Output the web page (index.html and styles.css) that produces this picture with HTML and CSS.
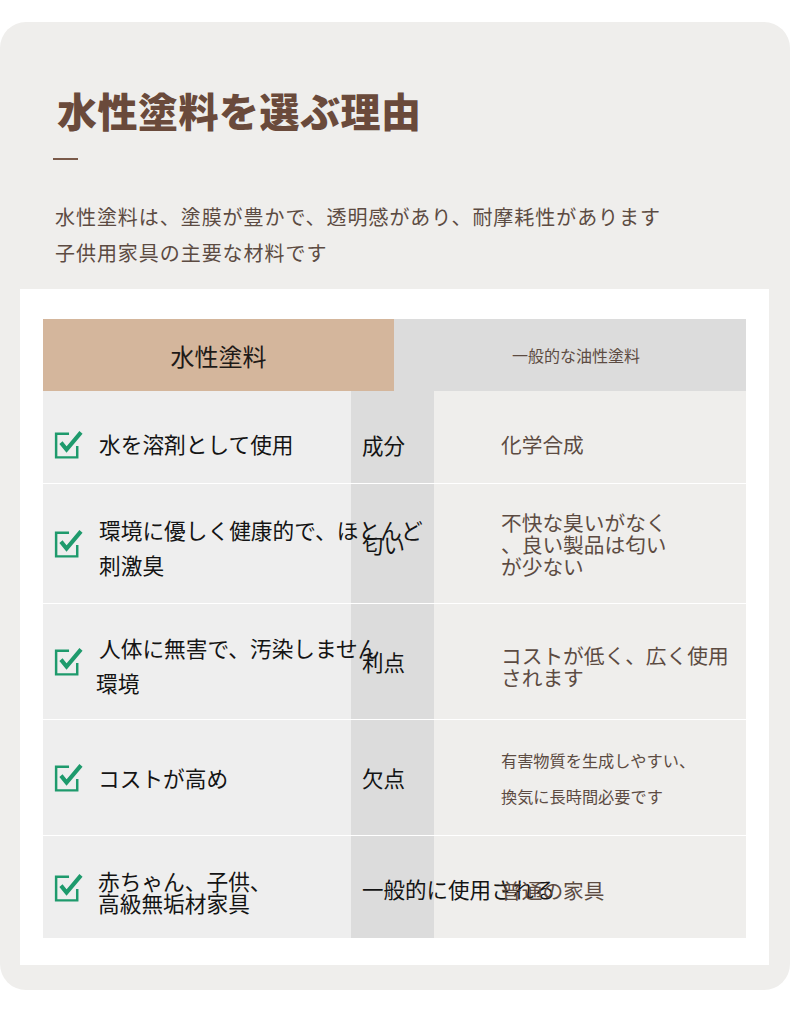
FILE: index.html
```html
<!DOCTYPE html>
<html lang="ja">
<head>
<meta charset="utf-8">
<title>水性塗料を選ぶ理由</title>
<link rel="stylesheet" href="styles.css">
</head>
<body>
<div class="card">
  <div class="intro">
    <h1 class="title">水性塗料を選ぶ理由</h1>
    <div class="dash"></div>
    <p class="lead">水性塗料は、塗膜が豊かで、透明感があり、耐摩耗性があります<br>子供用家具の主要な材料です</p>
  </div>
  <div class="panel">
    <div class="table">
      <div class="head">
        <div class="head-a">水性塗料</div>
        <div class="head-b">一般的な油性塗料</div>
      </div>
      <div class="row r1">
        <div class="c1"><svg class="chk" viewBox="0 0 26 26"><path d="M13.5 2.6H1.5v21.9h19.6V14" fill="none" stroke="#1e9a6c" stroke-width="2.3"/><path d="M6 10.8l5.2 6.4L24.6 1.3" fill="none" stroke="#1e9a6c" stroke-width="3.8"/></svg><span class="t1">水を溶剤として使用</span></div>
        <div class="c2"><span class="t2">成分</span></div>
        <div class="c3"><span class="t3">化学合成</span></div>
      </div>
      <div class="row r2">
        <div class="c1"><svg class="chk" viewBox="0 0 26 26"><path d="M13.5 2.6H1.5v21.9h19.6V14" fill="none" stroke="#1e9a6c" stroke-width="2.3"/><path d="M6 10.8l5.2 6.4L24.6 1.3" fill="none" stroke="#1e9a6c" stroke-width="3.8"/></svg><span class="t1 tall">環境に優しく健康的で、ほとんど<br>刺激臭</span></div>
        <div class="c2"><span class="t2">匂い</span></div>
        <div class="c3"><span class="t3 tight">不快な臭いがなく<br>、良い製品は匂い<br>が少ない</span></div>
      </div>
      <div class="row r3">
        <div class="c1"><svg class="chk" viewBox="0 0 26 26"><path d="M13.5 2.6H1.5v21.9h19.6V14" fill="none" stroke="#1e9a6c" stroke-width="2.3"/><path d="M6 10.8l5.2 6.4L24.6 1.3" fill="none" stroke="#1e9a6c" stroke-width="3.8"/></svg><span class="t1 tall">人体に無害で、汚染しません<br><span class="back">環境</span></span></div>
        <div class="c2"><span class="t2">利点</span></div>
        <div class="c3"><span class="t3 tight">コストが低く、広く使用<br>されます</span></div>
      </div>
      <div class="row r4">
        <div class="c1"><svg class="chk" viewBox="0 0 26 26"><path d="M13.5 2.6H1.5v21.9h19.6V14" fill="none" stroke="#1e9a6c" stroke-width="2.3"/><path d="M6 10.8l5.2 6.4L24.6 1.3" fill="none" stroke="#1e9a6c" stroke-width="3.8"/></svg><span class="t1 shift">コストが高め</span></div>
        <div class="c2"><span class="t2">欠点</span></div>
        <div class="c3"><span class="t3 small">有害物質を生成しやすい、<br>換気に長時間必要です</span></div>
      </div>
      <div class="row r5">
        <div class="c1"><svg class="chk" viewBox="0 0 26 26"><path d="M13.5 2.6H1.5v21.9h19.6V14" fill="none" stroke="#1e9a6c" stroke-width="2.3"/><path d="M6 10.8l5.2 6.4L24.6 1.3" fill="none" stroke="#1e9a6c" stroke-width="3.8"/></svg><span class="t1 tight shift">赤ちゃん、子供、<br>高級無垢材家具</span></div>
        <div class="c2"><span class="t2">一般的に使用される</span></div>
        <div class="c3"><span class="t3">普通の家具</span></div>
      </div>
    </div>
  </div>
</div>
</body>
</html>
```

FILE: styles.css
```css
html, body {
  margin: 0;
  padding: 0;
  background: #ffffff;
}
body {
  font-family: "Noto Sans CJK JP", "Noto Sans", sans-serif;
  width: 790px;
  height: 1009px;
  overflow: hidden;
}
.card {
  margin-top: 22px;
  background: #efeeec;
  border-radius: 26px;
  padding: 0 21px 25px 20px;
}
.intro {
  padding: 64px 0 0 33px;
}
.title {
  margin: 0 0 0 4px;
  font-size: 40px;
  line-height: 48px;
  font-weight: 900;
  color: #6a4a3b;
  letter-spacing: 0.5px;
}
.dash {
  width: 25px;
  height: 2px;
  background: #7a5a4a;
  margin-top: 24px;
}
.lead {
  margin: 39px 0 0 2px;
  font-size: 20px;
  line-height: 36px;
  letter-spacing: 0.95px;
  color: #5c4b42;
  height: 90px;
}
.panel {
  background: #ffffff;
  padding: 30px 23px 27px 23px;
}
.table {
  display: flex;
  flex-direction: column;
}
.head {
  display: flex;
  height: 72px;
}
.head-a {
  width: 351px;
  background: #d4b69c;
  display: flex;
  align-items: center;
  justify-content: center;
  font-size: 24px;
  color: #1e1a18;
}
.head-b {
  flex: 1;
  background: #dcdcdc;
  display: flex;
  align-items: center;
  justify-content: center;
  padding-left: 12px;
  font-size: 16px;
  color: #5c4b42;
}
.row {
  display: flex;
  border-top: 1px solid #ffffff;
}
.row.r1 { height: 92px; border-top: 0; padding-top: 14px; box-sizing: border-box; }
.row.r1 > div { margin-top: -14px; padding-top: 14px; }
.row.r2 { height: 119px; }
.row.r3 { height: 115px; }
.row.r4 { height: 115px; }
.row.r5 { height: 102px; }
.c1 {
  width: 297px;
  background: #eeeeee;
  display: flex;
  align-items: center;
  padding-left: 11px;
}
.chk {
  width: 29px;
  height: 28px;
  flex: none;
  margin-top: 1px;
}
.t1 {
  position: relative;
  z-index: 1;
  margin-left: 16px;
  font-size: 21.7px;
  line-height: 30px;
  color: #141414;
  white-space: nowrap;
}
.t1.tall { line-height: 35px; padding-top: 6px; }
.t1.tight { line-height: 22px; padding-top: 10px; }
.t1.shift { margin-left: 15px; }
.back { margin-left: -3px; }
.c2 {
  width: 72px;
  background: #dcdcdc;
  display: flex;
  align-items: center;
  padding-left: 11px;
}
.t2 {
  position: relative;
  z-index: 1;
  font-size: 21.5px;
  color: #141414;
  white-space: nowrap;
}
.r5 .t2 { padding-top: 3px; }
.c3 {
  flex: 1;
  background: #efeeec;
  display: flex;
  align-items: center;
  padding-left: 67px;
}
.t3 {
  position: relative;
  z-index: 1;
  font-size: 20.7px;
  line-height: 30px;
  color: #5c4b42;
  white-space: nowrap;
}
.t3.tight { line-height: 22px; }
.r3 .t3 { padding-top: 8px; }
.r5 .t3 { padding-top: 6px; }
.t3.small { font-size: 16.2px; line-height: 36px; }
```
